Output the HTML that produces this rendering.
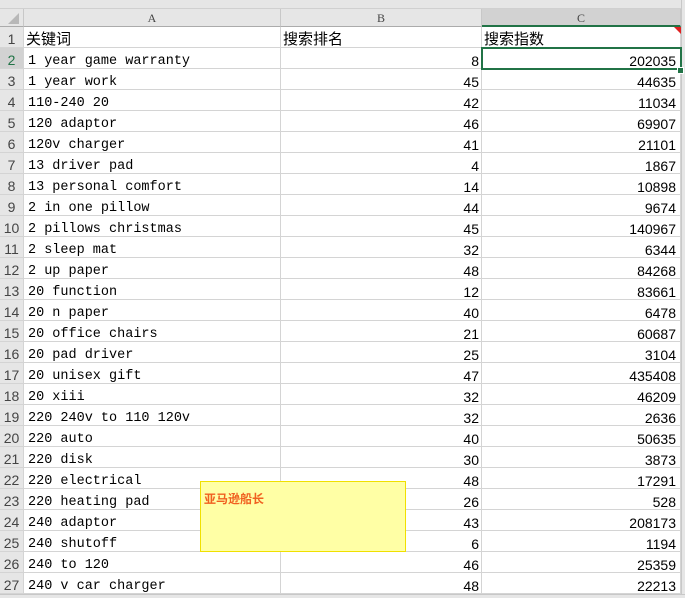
<!DOCTYPE html><html><head><meta charset="utf-8"><style>
body{margin:0;width:685px;height:597px;overflow:hidden;background:#fff;position:relative;font-family:"Liberation Mono","Noto Sans CJK SC",monospace;}
.top{position:absolute;left:0;top:0;width:685px;height:8px;background:#e6e6e6;border-bottom:1px solid #d0d0d0}
.hdr{position:absolute;top:9px;height:18px;background:#e6e6e6;border-right:1px solid #c8c8c8;border-bottom:1px solid #ababab;box-sizing:border-box;text-align:center;font:12px "Liberation Serif",serif;color:#444;line-height:18px}
.r{position:absolute;left:0;width:681px;height:21px;box-sizing:border-box;border-bottom:1px solid #d4d4d4}
.r div{position:absolute;top:0;height:20px;box-sizing:border-box;border-right:1px solid #d4d4d4;line-height:27px;white-space:nowrap;font-size:13.5px;color:#000;overflow:visible}
.n{left:0;width:24px;background:#e6e6e6;text-align:center;color:#444!important;font:14px "Liberation Sans",sans-serif!important;line-height:25px!important}
.a{left:24px;width:257px;padding-left:4px}
.b{left:281px;width:201px;text-align:right;padding-right:2px;font-family:"Liberation Sans",sans-serif!important;font-size:14px!important}
.c{left:482px;width:199px;text-align:right;padding-right:4px;font-family:"Liberation Sans",sans-serif!important;font-size:14px!important}
.cj{font-family:"Liberation Sans","Noto Sans CJK SC",sans-serif!important;font-size:15px!important;text-align:left!important;padding-left:2px;line-height:25px!important}
</style></head><body>
<div class="top"></div>
<div class="hdr" style="left:0;width:24px"><svg width="24" height="18"><polygon points="19,4 19,15 8,15" fill="#b8b8b8"/></svg></div>
<div class="hdr" style="left:24px;width:257px">A</div>
<div class="hdr" style="left:281px;width:201px">B</div>
<div class="hdr" style="left:482px;width:199px;background:#d2d2d2;border-bottom:2px solid #217346">C</div>
<div style="position:absolute;left:681px;top:0;width:4px;height:597px;background:#e6e6e6;border-left:1px solid #c8c8c8"></div>
<div class="r" style="top:27px"><div class="n">1</div><div class="a cj">关键词</div><div class="b cj">搜索排名</div><div class="c cj">搜索指数</div></div>
<div class="r" style="top:48px"><div class="n" style="background:#d2d2d2;color:#217346!important">2</div><div class="a">1 year game warranty</div><div class="b">8</div><div class="c">202035</div></div>
<div class="r" style="top:69px"><div class="n">3</div><div class="a">1 year work</div><div class="b">45</div><div class="c">44635</div></div>
<div class="r" style="top:90px"><div class="n">4</div><div class="a">110-240 20</div><div class="b">42</div><div class="c">11034</div></div>
<div class="r" style="top:111px"><div class="n">5</div><div class="a">120 adaptor</div><div class="b">46</div><div class="c">69907</div></div>
<div class="r" style="top:132px"><div class="n">6</div><div class="a">120v charger</div><div class="b">41</div><div class="c">21101</div></div>
<div class="r" style="top:153px"><div class="n">7</div><div class="a">13 driver pad</div><div class="b">4</div><div class="c">1867</div></div>
<div class="r" style="top:174px"><div class="n">8</div><div class="a">13 personal comfort</div><div class="b">14</div><div class="c">10898</div></div>
<div class="r" style="top:195px"><div class="n">9</div><div class="a">2 in one pillow</div><div class="b">44</div><div class="c">9674</div></div>
<div class="r" style="top:216px"><div class="n">10</div><div class="a">2 pillows christmas</div><div class="b">45</div><div class="c">140967</div></div>
<div class="r" style="top:237px"><div class="n">11</div><div class="a">2 sleep mat</div><div class="b">32</div><div class="c">6344</div></div>
<div class="r" style="top:258px"><div class="n">12</div><div class="a">2 up paper</div><div class="b">48</div><div class="c">84268</div></div>
<div class="r" style="top:279px"><div class="n">13</div><div class="a">20 function</div><div class="b">12</div><div class="c">83661</div></div>
<div class="r" style="top:300px"><div class="n">14</div><div class="a">20 n paper</div><div class="b">40</div><div class="c">6478</div></div>
<div class="r" style="top:321px"><div class="n">15</div><div class="a">20 office chairs</div><div class="b">21</div><div class="c">60687</div></div>
<div class="r" style="top:342px"><div class="n">16</div><div class="a">20 pad driver</div><div class="b">25</div><div class="c">3104</div></div>
<div class="r" style="top:363px"><div class="n">17</div><div class="a">20 unisex gift</div><div class="b">47</div><div class="c">435408</div></div>
<div class="r" style="top:384px"><div class="n">18</div><div class="a">20 xiii</div><div class="b">32</div><div class="c">46209</div></div>
<div class="r" style="top:405px"><div class="n">19</div><div class="a">220 240v to 110 120v</div><div class="b">32</div><div class="c">2636</div></div>
<div class="r" style="top:426px"><div class="n">20</div><div class="a">220 auto</div><div class="b">40</div><div class="c">50635</div></div>
<div class="r" style="top:447px"><div class="n">21</div><div class="a">220 disk</div><div class="b">30</div><div class="c">3873</div></div>
<div class="r" style="top:468px"><div class="n">22</div><div class="a">220 electrical</div><div class="b">48</div><div class="c">17291</div></div>
<div class="r" style="top:489px"><div class="n">23</div><div class="a">220 heating pad</div><div class="b">26</div><div class="c">528</div></div>
<div class="r" style="top:510px"><div class="n">24</div><div class="a">240 adaptor</div><div class="b">43</div><div class="c">208173</div></div>
<div class="r" style="top:531px"><div class="n">25</div><div class="a">240 shutoff</div><div class="b">6</div><div class="c">1194</div></div>
<div class="r" style="top:552px"><div class="n">26</div><div class="a">240 to 120</div><div class="b">46</div><div class="c">25359</div></div>
<div class="r" style="top:573px"><div class="n">27</div><div class="a">240 v car charger</div><div class="b">48</div><div class="c">22213</div></div>
<div style="position:absolute;left:0;top:594px;width:685px;height:3px;background:#e6e6e6;border-top:1px solid #c8c8c8"></div>
<div style="position:absolute;left:481px;top:47px;width:201px;height:23px;box-sizing:border-box;border:2px solid #217346"></div>
<div style="position:absolute;left:677px;top:67px;width:5px;height:5px;background:#217346;border:1px solid #fff"></div>
<svg style="position:absolute;left:674px;top:27px" width="7" height="7"><polygon points="0,0 7,0 7,7" fill="#e02020"/></svg>
<div style="position:absolute;left:200px;top:481px;width:206px;height:71px;box-sizing:border-box;background:#ffffa5;border:1px solid #f0e000;font:bold 12px 'Liberation Sans','Noto Sans CJK SC',sans-serif;color:#f06020;padding:8px 0 0 3px">亚马逊船长</div>
</body></html>
